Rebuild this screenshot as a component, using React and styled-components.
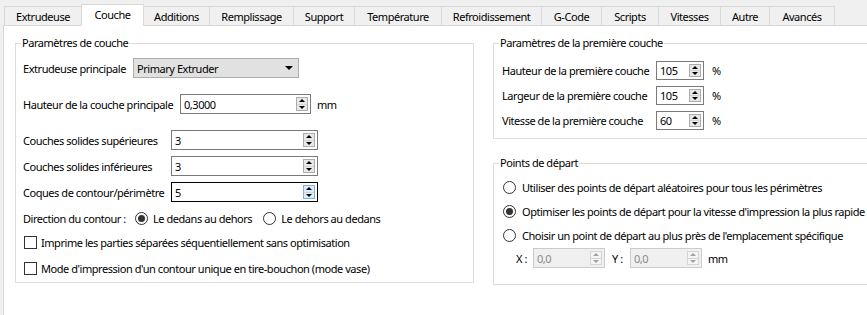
import React from "react";
import styled, { createGlobalStyle, css } from "styled-components";

const GlobalStyle = createGlobalStyle`
  html, body {
    margin: 0;
    padding: 0;
    background: #f0f0f0;
  }
  body {
    font-family: "Noto Sans", "Open Sans", sans-serif;
    font-size: 11px;
    letter-spacing: -0.45px;
    color: #000;
  }
`;

const Window = styled.div`
  width: 867px;
  height: 315px;
  overflow: hidden;
  background: #f0f0f0;
`;

const TabBar = styled.div`
  display: flex;
  align-items: flex-end;
  height: 25px;
  padding-left: 5px;
`;

const Tab = styled.div`
  box-sizing: border-box;
  flex: none;
  width: ${(p) => p.$w}px;
  height: 19px;
  margin-left: -1px;
  border: 1px solid #d9d9d9;
  border-bottom: none;
  background: #f0f0f0;
  display: flex;
  align-items: center;
  justify-content: center;
  white-space: nowrap;
  ${(p) =>
    p.$active &&
    css`
      position: relative;
      z-index: 1;
      height: 22px;
      margin-bottom: -1px;
      background: #fff;
      padding-bottom: 2px;
    `}
`;

const Pane = styled.div`
  margin-left: 3px;
  height: 300px;
  background: #fff;
  border-top: 1px solid #d9d9d9;
  border-left: 1px solid #d9d9d9;
  display: flex;
  align-items: flex-start;
  gap: 19px;
  padding: 9px 0 0 11px;
`;

const Column = styled.div`
  display: flex;
  flex-direction: column;
  gap: 16px;
  flex: none;
`;

const Group = styled.fieldset`
  box-sizing: border-box;
  flex: none;
  margin: 0;
  padding: 0;
  min-width: 0;
  width: ${(p) => p.$w}px;
  border: 1px solid #dcdcdc;
`;

const Legend = styled.legend`
  margin-left: 5px;
  padding: 0 1px;
  height: 16px;
  line-height: 16px;
`;

const GroupBody = styled.div`
  display: flex;
  flex-direction: column;
  padding: ${(p) => p.$pad};
`;

const Row = styled.div`
  display: flex;
  align-items: center;
  height: ${(p) => p.$h || 20}px;
  margin-top: ${(p) => p.$mt || 0}px;
  padding-left: ${(p) => p.$indent || 0}px;
  white-space: nowrap;
`;

const Label = styled.span`
  flex: none;
  width: ${(p) => (p.$w ? `${p.$w}px` : "auto")};
  margin-left: ${(p) => p.$gap || 0}px;
`;

const Combo = styled.div`
  box-sizing: border-box;
  flex: none;
  width: 166px;
  height: 20px;
  border: 1px solid #adadad;
  background: #e1e1e1;
  display: flex;
  align-items: center;
  justify-content: space-between;
  padding: 0 5px 0 3px;
`;

const Tri = styled.span`
  width: 0;
  height: 0;
  border-left: ${(p) => p.$s}px solid transparent;
  border-right: ${(p) => p.$s}px solid transparent;
  ${(p) =>
    p.$up
      ? css`
          border-bottom: ${p.$t}px solid ${p.$c};
        `
      : css`
          border-top: ${p.$t}px solid ${p.$c};
        `}
`;

const SpinBox = styled.div`
  box-sizing: border-box;
  flex: none;
  width: ${(p) => p.$w}px;
  height: ${(p) => p.$h}px;
  display: flex;
  align-items: stretch;
  border: 1px solid
    ${(p) => (p.$disabled ? "#cccccc" : p.$focus ? "#000000" : "#7a7a7a")};
  background: ${(p) => (p.$disabled ? "#f0f0f0" : "#fff")};
  color: ${(p) => (p.$disabled ? "#8a8a8a" : "#000")};
`;

const SpinValue = styled.span`
  flex: 1;
  display: flex;
  align-items: center;
  padding-left: 3px;
`;

const SpinButtons = styled.div`
  box-sizing: border-box;
  width: 12px;
  margin: 2px 2px 2px 0;
  display: flex;
  flex-direction: column;
  border: 1px solid ${(p) => (p.$disabled ? "#d5d5d5" : p.$focus ? "#7fb0de" : "#acacac")};
  background: ${(p) => (p.$disabled ? "#f4f4f4" : p.$focus ? "#dcecfc" : "#e8e8e8")};
`;

const SpinHalf = styled.div`
  flex: 1;
  display: flex;
  align-items: center;
  justify-content: center;
  & + & {
    border-top: 1px solid ${(p) => (p.$disabled ? "#d5d5d5" : "#acacac")};
  }
`;

const Option = styled.label`
  display: flex;
  align-items: center;
  gap: ${(p) => p.$gap || 5}px;
  margin-left: ${(p) => p.$ml || 0}px;
`;

const RadioCircle = styled.span`
  box-sizing: border-box;
  flex: none;
  width: 13px;
  height: 13px;
  border-radius: 50%;
  border: 1px solid #333;
  background: #fff;
  display: flex;
  align-items: center;
  justify-content: center;
  &::after {
    content: "";
    width: 7px;
    height: 7px;
    border-radius: 50%;
    background: #333;
    display: ${(p) => (p.$on ? "block" : "none")};
  }
`;

const CheckBox = styled.span`
  box-sizing: border-box;
  flex: none;
  width: 13px;
  height: 13px;
  margin-left: 1px;
  border: 1px solid #333;
  background: #fff;
`;

const tabs = [
  { label: "Extrudeuse", w: 78 },
  { label: "Couche", w: 63, active: true },
  { label: "Additions", w: 67 },
  { label: "Remplissage", w: 85 },
  { label: "Support", w: 62 },
  { label: "Température", w: 88 },
  { label: "Refroidissement", w: 101 },
  { label: "G-Code", w: 61 },
  { label: "Scripts", w: 58 },
  { label: "Vitesses", w: 63 },
  { label: "Autre", w: 50 },
  { label: "Avancés", w: 66 },
];

function Spin({ value, w, h = 20, focus, disabled }) {
  const c = disabled ? "#a0a0a0" : "#000";
  return (
    <SpinBox $w={w} $h={h} $focus={focus} $disabled={disabled}>
      <SpinValue>{value}</SpinValue>
      <SpinButtons $focus={focus} $disabled={disabled}>
        <SpinHalf $disabled={disabled}>
          <Tri $up $s={3} $t={3} $c={c} />
        </SpinHalf>
        <SpinHalf $disabled={disabled}>
          <Tri $s={3} $t={3} $c={c} />
        </SpinHalf>
      </SpinButtons>
    </SpinBox>
  );
}

function Radio({ on, children, ml, gap }) {
  return (
    <Option $ml={ml} $gap={gap}>
      <RadioCircle $on={on} />
      <span>{children}</span>
    </Option>
  );
}

function Check({ children }) {
  return (
    <Option $gap={4}>
      <CheckBox />
      <span>{children}</span>
    </Option>
  );
}

export default function App() {
  return (
    <Window>
      <GlobalStyle />
      <TabBar>
        {tabs.map((t) => (
          <Tab key={t.label} $w={t.w} $active={t.active}>
            {t.label}
          </Tab>
        ))}
      </TabBar>
      <Pane>
        <Group $w={459}>
          <Legend>Paramètres de couche</Legend>
          <GroupBody $pad="0 0 6px 7px">
            <Row $mt={7}>
              <Label $w={110}>Extrudeuse principale</Label>
              <Combo>
                <span>Primary Extruder</span>
                <Tri $s={4} $t={4} $c="#000" />
              </Combo>
            </Row>
            <Row $mt={16}>
              <Label $w={157}>Hauteur de la couche principale</Label>
              <Spin value="0,3000" w={131} />
              <Label $gap={6}>mm</Label>
            </Row>
            <Row $mt={16}>
              <Label $w={148}>Couches solides supérieures</Label>
              <Spin value="3" w={147} />
            </Row>
            <Row $mt={6}>
              <Label $w={148}>Couches solides inférieures</Label>
              <Spin value="3" w={147} />
            </Row>
            <Row $mt={6}>
              <Label $w={148}>Coques de contour/périmètre</Label>
              <Spin value="5" w={147} focus />
            </Row>
            <Row $mt={8} $h={16}>
              <Label $w={112}>Direction du contour :</Label>
              <Radio on>Le dedans au dehors</Radio>
              <Radio ml={11}>Le dehors au dedans</Radio>
            </Row>
            <Row $mt={8} $h={16}>
              <Check>Imprime les parties séparées séquentiellement sans optimisation</Check>
            </Row>
            <Row $mt={10} $h={16}>
              <Check>Mode d'impression d'un contour unique en tire-bouchon (mode vase)</Check>
            </Row>
          </GroupBody>
        </Group>

        <Column>
          <Group $w={400}>
            <Legend>Paramètres de la première couche</Legend>
            <GroupBody $pad="0 0 8px 8px">
              <Row $mt={10} $h={19}>
                <Label $w={154}>Hauteur de la première couche</Label>
                <Spin value="105" w={48} h={19} />
                <Label $gap={8}>%</Label>
              </Row>
              <Row $mt={6} $h={19}>
                <Label $w={154}>Largeur de la première couche</Label>
                <Spin value="105" w={48} h={19} />
                <Label $gap={8}>%</Label>
              </Row>
              <Row $mt={6} $h={19}>
                <Label $w={154}>Vitesse de la première couche</Label>
                <Spin value="60" w={48} h={19} />
                <Label $gap={8}>%</Label>
              </Row>
            </GroupBody>
          </Group>

          <Group $w={400}>
            <Legend>Points de départ</Legend>
            <GroupBody $pad="0 0 16px 9px">
              <Row $mt={8} $h={16}>
                <Radio gap={6}>Utiliser des points de départ aléatoires pour tous les périmètres</Radio>
              </Row>
              <Row $mt={8} $h={16}>
                <Radio on gap={6}>
                  Optimiser les points de départ pour la vitesse d'impression la plus rapide
                </Radio>
              </Row>
              <Row $mt={8} $h={16}>
                <Radio gap={6}>Choisir un point de départ au plus près de l'emplacement spécifique</Radio>
              </Row>
              <Row $mt={5} $h={20} $indent={13}>
                <Label $w={17}>X :</Label>
                <Spin value="0,0" w={72} disabled />
                <Label $w={18} $gap={7}>Y :</Label>
                <Spin value="0,0" w={72} disabled />
                <Label $gap={6}>mm</Label>
              </Row>
            </GroupBody>
          </Group>
        </Column>
      </Pane>
    </Window>
  );
}
